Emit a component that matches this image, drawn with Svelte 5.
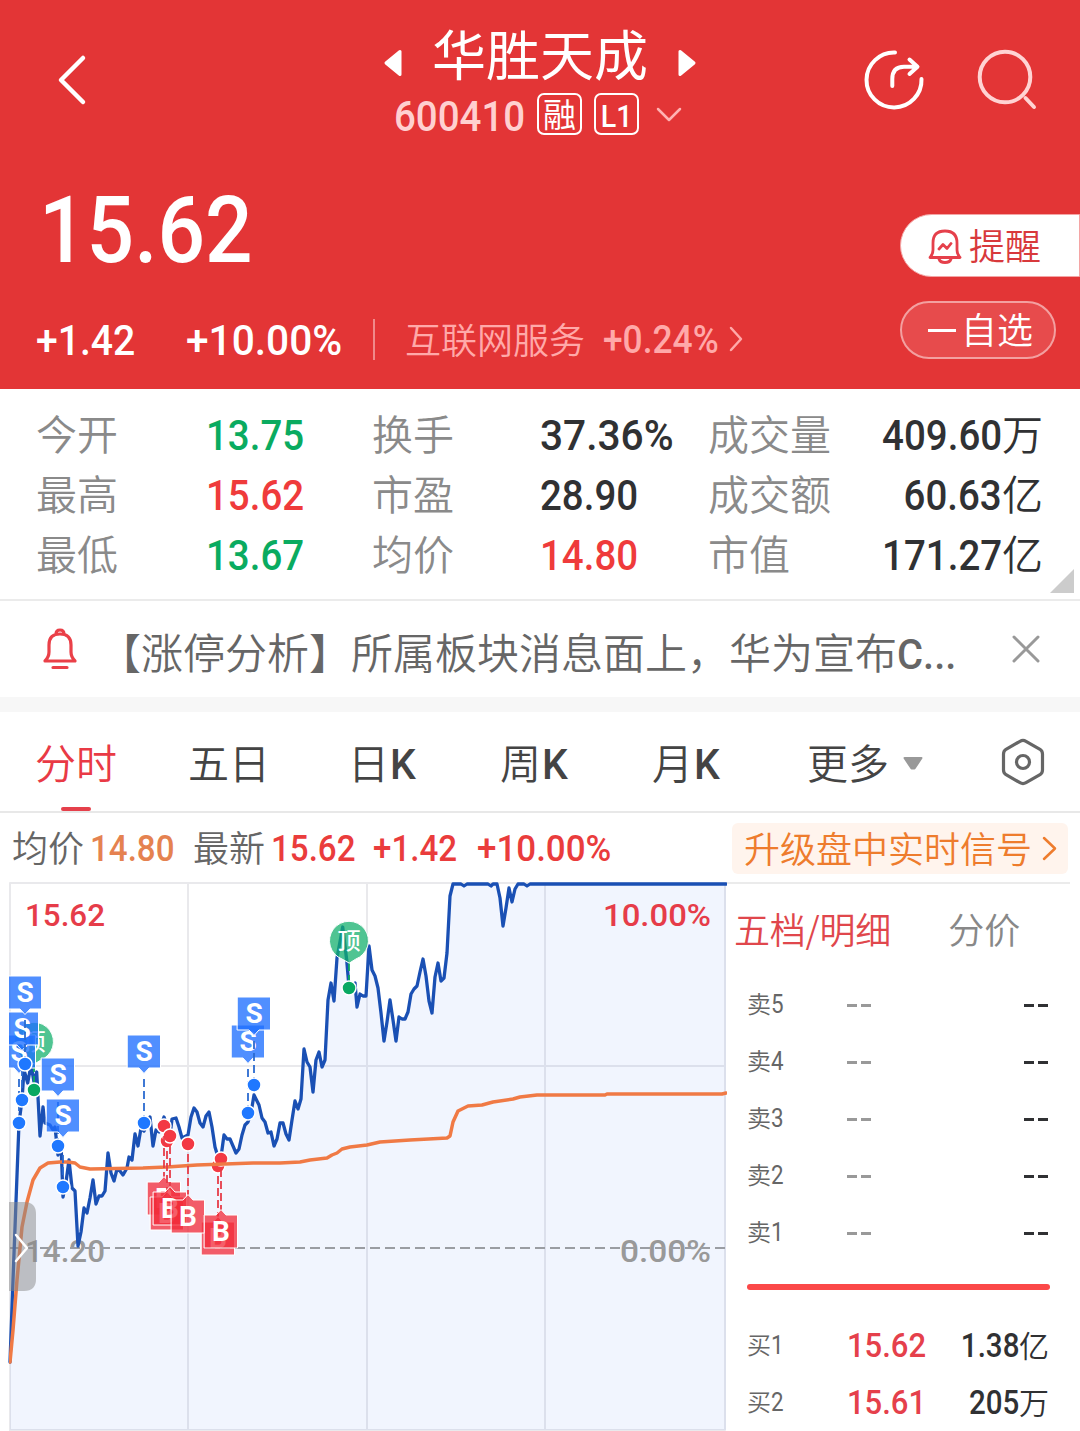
<script>
  const quotes = [
    [['今开', '13.75', 'green'], ['换手', '37.36%', 'pct'], ['成交量', '409.60', '', '万']],
    [['最高', '15.62', 'red'], ['市盈', '28.90', ''], ['成交额', '60.63', '', '亿']],
    [['最低', '13.67', 'green'], ['均价', '14.80', 'red'], ['市值', '171.27', '', '亿']]
  ];
  const asks = [5, 4, 3, 2, 1];
  const bids = [[1, '15.62', '1.38', '亿'], [2, '15.61', '205', '万']];

  const price =
    '10,1362 13,1280 19,1123 22,1100 24,1070 27.7,1083 31,1065 34,1082 36.7,1072 40,1136 43,1107 45,1123 50,1125 53,1130 55,1127 58,1155 61,1143 63,1197 66,1182 69,1160 72,1188 75,1191 78,1246 81,1232 84,1208 87,1213 90,1198 93,1180 96,1204 99,1196 102,1196 105,1191 108,1153 111,1173 114,1181 117,1169 120,1171 123,1175 127,1168 129,1157 132,1160 135,1134 138,1146 141,1128 144,1131 150,1117 153,1146 156,1130 159,1132 164,1117 167,1126 170,1136 172,1119 176,1118 179,1127 182,1138 188,1135 191,1117 194,1108 197,1112 200,1123 203,1127 206,1116 209,1112 212,1127 215,1147 218,1157 221,1157 224,1135 227,1139 230,1139 236,1153 239,1149 242,1135 245,1125 248,1122 251,1113 254,1095 259,1105 262,1118 265,1122 268,1133 271,1132 274,1146 277,1139 280,1123 283,1123 286,1134 289,1140 292,1120 295,1101 298,1109 301,1099 304,1049 307,1062 310,1067 313,1092 316,1060 319,1052 322,1067 325,1060 328,1000 331,983 334,1001 337,958 342.7,927 346.7,960 349,987 355,983 357,1007 360,994 363,996 366,996 369,946 372,970 375,976 378,988 381,1013 384,1041 387,1022 390,1000 393,1020 396,1041 399,1017 402,1019 405,1019 408,1012 411,994 414,989 417,986 420,972 423,959 426,976 429,1001 432,1013 435,977 438,963 441,981 444,978 447,953 450,896 453,884 461,884 464,886 467,884 488,884 491,886 493,884 497,884 500,898 503,926 506,908 509,888 512,902 515,889 518,884 524,884 527,886 530,884 726,884';
  const average =
    '10,1362 13,1330 17,1280 22,1227 27,1202 33,1180 40,1168 48,1163 60,1162 68,1162 75,1163 80,1167 90,1169 143,1168 167,1167 197,1165 253,1163 280,1163 300,1162 310,1160 327,1158 332,1155 337,1153 342,1149 350,1147 367,1145 380,1142 410,1140 447,1138 450,1136 453,1122 458,1111 468,1106 482,1105 493,1102 513,1099 520,1097 537,1095 605,1095 607,1094 722,1094 726,1093';

  // [x, dot y, box top]
  const sells = [[19, 1123, 1035], [22, 1100, 1012], [25, 1064, 976], [58, 1146, 1058], [63, 1187, 1099], [144, 1123, 1035], [248, 1113, 1025], [254, 1085, 997]];
  const buys = [[164, 1126, 1182], [167, 1141, 1197], [170, 1136, 1192], [218, 1166, 1222], [188, 1144, 1200], [221, 1159, 1215]];
  const tops = [[34, 1090, 1042], [349, 988, 941]];
</script>

<div class="screen">
  <header>
    <div class="bar">
      <div class="side">
        <svg class="back" width="30" height="52" viewBox="0 0 30 52"><path d="M26 4 4 26 26 48" /></svg>
      </div>
      <div class="center">
        <div class="name">
          <svg width="19" height="28" viewBox="0 0 19 28"><path d="M17 2.500v23L3 14z" /></svg>
          <h1>华胜天成</h1>
          <svg width="19" height="28" viewBox="0 0 19 28"><path d="M2 2.500v23L16 14z" /></svg>
        </div>
        <div class="code">
          <span class="num">600410</span>
          <b class="tag">融</b>
          <b class="tag"><span class="num">L1</span></b>
          <svg width="26" height="16" viewBox="0 0 26 16"><path d="M2 3l11 11L24 3" /></svg>
        </div>
      </div>
      <div class="side tools">
        <svg width="62" height="62" viewBox="0 0 62 62"><path d="M32 3.500A27.500 27.500 0 1 0 58.500 30M29.300 37V30Q29.300 17.700 41 17.700H54M46.500 10.500l8 7.200-8 7.200" /></svg>
        <svg class="find" width="62" height="62" viewBox="0 0 62 62"><circle cx="30" cy="28" r="25.300" /><path d="M50.500 49l8.500 9" /></svg>
      </div>
    </div>
    <div class="summary">
      <div class="figures">
        <div class="last num">15.62</div>
        <div class="change">
          <span class="num c1">+1.42</span>
          <span class="num pct c2">+10.00%</span>
          <i></i>
          <span class="sector">互联网服务</span>
          <span class="num pct c3">+0.24%</span>
          <svg width="16" height="28" viewBox="0 0 16 28"><path d="M3 3l10 11L3 25" /></svg>
        </div>
      </div>
      <div class="actions">
        <button class="alert">
          <svg width="34" height="36" viewBox="0 0 34 36"><path d="M2 29.500Q5 26 5 22V15Q5 3 17 3T29 15V22Q29 26 32 29.500ZM11 31Q12 34.500 17 34.500T23 31M11 21l4-4.500 4 4 4-5" /></svg><span>提醒</span>
        </button>
        <button class="fav"><s></s><span>自选</span></button>
      </div>
    </div>
  </header>

  <section class="quotes">
    {#each quotes as row}
      <div class="qrow">
        {#each row as [label, value, tone, unit]}
          <span class="label">{label}</span>
          <span class="value {tone}"><span class="num {tone}">{value}</span>{unit ?? ''}</span>
        {/each}
      </div>
    {/each}
    <svg class="corner" width="24" height="24"><path d="M24 0V24H0z" /></svg>
  </section>

  <section class="notice">
    <svg class="bell" width="36" height="44" viewBox="0 0 36 44"><path d="M3 34Q7 30 7 25V18Q7 7 18 7T29 18V25Q29 30 33 34ZM14 7Q14 3 18 3T22 7M11 40.500H25" /></svg>
    <p>【涨停分析】所属板块消息面上，华为宣布<span class="num">C...</span></p>
    <svg class="close" width="30" height="30" viewBox="0 0 30 30"><path d="M3 3l24 24M27 3L3 27" /></svg>
  </section>

  <nav>
    <span class="tab t1 on">分时</span>
    <span class="tab t2">五日</span>
    <span class="tab t3">日<b class="num">K</b></span>
    <span class="tab t4">周<b class="num">K</b></span>
    <span class="tab t5">月<b class="num">K</b></span>
    <span class="tab t6">更多</span>
    <svg class="drop" width="22" height="15" viewBox="0 0 22 15"><path d="M2.500 2h17L12.500 12.500h-3z" /></svg>
    <svg class="hex" width="44" height="50" viewBox="0 0 44 50"><path d="M19 4.300Q22 2.500 25 4.300L39 12.300Q41.500 14 41.500 17V33Q41.500 36 39 37.700L25 45.700Q22 47.500 19 45.700L5 37.700Q2.500 36 2.500 33V17Q2.500 14 5 12.300Z" /><circle cx="22" cy="25" r="6.500" /></svg>
  </nav>

  <div class="ticker">
    <span class="k1">均价</span><span class="num v1">14.80</span>
    <span class="k2">最新</span><span class="num v2">15.62</span>
    <span class="num v3">+1.42</span>
    <span class="num pct v4">+10.00%</span>
    <a class="upgrade"><span>升级盘中实时信号</span><svg width="16" height="26" viewBox="0 0 16 26"><path d="M2 3l11 10.500L2 24" /></svg></a>
  </div>

  <main>
    <svg class="chart" width="727" height="549" viewBox="0 882 727 549">
      <defs><clipPath id="plot"><rect x="9" y="882" width="718" height="549" /></clipPath></defs>
      <path class="grid" d="M10 1431V883H726M10 1066H725M10 1430H725M188 883V1430M367 883V1430M545 883V1430M725 883V1430" />
      <polygon class="area" points="{price} 726,1430 10,1430" />
      <text class="axis" x="25" y="1262" textLength="80" lengthAdjust="spacingAndGlyphs">14.20</text>
      <text class="axis end" x="711" y="1262" textLength="91" lengthAdjust="spacingAndGlyphs">0.00%</text>
      <path class="zero" d="M10 1248H725" />
      <text class="limit" x="25" y="926" textLength="80" lengthAdjust="spacingAndGlyphs">15.62</text>
      <text class="limit end" x="711" y="926" textLength="108" lengthAdjust="spacingAndGlyphs">10.00%</text>
      <polyline class="price" points={price} />
      <g clip-path="url(#plot)">
        {#each tops as [x, y, c]}
          <path class="stem green" d="M{x} {c + 22}V{y}" />
          <path class="pin" d="M{x} {c + 22}l-7 -4A19.500 19.500 0 1 1 {x + 7} {c + 18}z" />
          <text class="top" x={x} y={c + 8}>顶</text>
          <circle class="dot green" cx={x} cy={y} r="7" />
        {/each}
        {#each buys as [x, y]}
          <circle class="dot red" cx={x} cy={y} r="7" />
        {/each}
        <polyline class="avg" points={average} />
        {#each sells as [x, y, t]}
          <path class="stem blue" d="M{x} {y}V{t + 44}" />
          <path class="sell" d="M{x - 16.5} {t}h33v33h-11.500l-5 5.500-5-5.500h-11.500z" />
          <text class="mark" x={x} y={t + 26}>S</text>
        {/each}
        {#each sells as [x, y]}
          <circle class="dot blue" cx={x} cy={y} r="7" />
        {/each}
        {#each buys as [x, y, t]}
          <path class="stem red" d="M{x} {y + 10}V{t - 5}" />
          <path class="buy" d="M{x - 16.5} {t}h11.500l5-5.500 5 5.500h11.500v33h-33z" />
          <text class="mark" x={x} y={t + 26}>B</text>
        {/each}
        <path class="handle" d="M9 1202H24Q36 1202 36 1214V1279Q36 1291 24 1291H9z" />
        <path class="grip" d="M16 1235l11 13-11 13" />
      </g>
    </svg>

    <aside>
      <div class="modes"><span class="on">五档/明细</span><span>分价</span></div>
      {#each asks as n}
        <div class="level"><span class="side-label">卖<b class="num">{n}</b></span><em class="none"><i></i><i></i></em><em class="none dark"><i></i><i></i></em></div>
      {/each}
      <hr />
      {#each bids as [n, p, v, u]}
        <div class="level"><span class="side-label">买<b class="num">{n}</b></span><em class="num p">{p}</em><em class="v"><span class="num">{v}</span>{u}</em></div>
      {/each}
    </aside>
  </main>
</div>

<style>
  :global(body) { background: #fff; overflow: hidden; }
  .screen { width: 1080px; height: 1431px; overflow: hidden; background: #fff; color: #303133; font-family: "Noto Sans CJK SC", sans-serif; font-weight: 350; }
  .screen * { box-sizing: border-box; }
  span, b, em, h1, p { white-space: nowrap; font-style: normal; }
  svg { display: block; flex: none; fill: none; stroke-linecap: round; stroke-linejoin: round; }
  .num { display: inline-block; font-family: Roboto, sans-serif; font-weight: 500; transform: scaleX(.895); transform-origin: left; }
  .num.pct { transform: scaleX(.945); }
  .red { color: #ef3b3b; }
  .green { color: #0aab60; }

  header { height: 389px; background: #e33536; color: #fff; }
  .bar { display: flex; height: 150px; }
  .side { width: 360px; }
  .back { margin: 54px 0 0 57px; stroke: #fff; stroke-width: 4.500; }
  .center { width: 360px; padding-top: 10px; }
  .name { display: flex; justify-content: center; align-items: center; gap: 30px; height: 83px; }
  .name svg { fill: #fff; stroke: #fff; stroke-width: 3; margin-top: 23px; }
  h1 { margin: 3px 0 0; font-size: 54px; line-height: 60px; font-weight: 400; }
  .code { display: flex; align-items: center; height: 42px; padding-left: 34px; }
  .code > .num { font-size: 43px; width: 143px; color: #ffd0d0; padding-top: 3px; }
  .tag { width: 45px; height: 42px; margin-right: 12px; border: 2.500px solid #fff; border-radius: 7px; font-size: 33px; line-height: 37px; font-weight: 400; text-align: center; }
  .tag .num { font-size: 32px; line-height: 33px; transform-origin: center; }
  .code svg { margin-left: 5px; stroke: #ffb3b3; stroke-width: 2.500; }
  .tools { display: flex; padding: 49px 0 0 143px; gap: 50px; }
  .tools svg { stroke: #fff; stroke-width: 4; }
  .tools .find { stroke: #ffd3d3; }
  .summary { display: flex; justify-content: space-between; }
  .last { display: block; margin: 31px 0 0 39px; font-size: 92px; line-height: 100px; height: 100px; transform: scaleX(.91); }
  .change { display: flex; align-items: center; height: 50px; margin-top: 34px; padding-left: 36px; font-size: 43px; }
  .change .c1 { width: 150px; transform: scaleX(.91); }
  .c2 { width: 187px; }
  .change i { width: 2px; height: 41px; background: #f08a8a; margin: -2px 30px 0 0; }
  .sector { width: 198px; font-size: 36px; line-height: 50px; margin-top: -5px; color: #ffa9a9; }
  .change .c3 { width: 125px; font-size: 38px; color: #ffa9a9; transform: scaleX(.93); }
  .change svg { margin-top: -2px; stroke: #ffa9a9; stroke-width: 2.500; }
  .actions { width: 180px; padding-top: 64px; }
  button { display: flex; align-items: center; font: 350 36px/36px "Noto Sans CJK SC", sans-serif; color: #d8393c; }
  button span { margin-top: -4px; }
  .alert { width: 180px; height: 63px; padding: 0 0 0 27px; gap: 7px; background: #fff; border: 1px solid #f4a5a5; border-radius: 32px 0 0 32px; }
  .alert svg { stroke: #e5404b; stroke-width: 2.800; }
  .fav { width: 156px; height: 58px; margin-top: 24px; padding: 0 0 0 26px; gap: 5px; color: #fff; background: #e74b4c; border: 2px solid #f3a0a0; border-radius: 29px; }
  .fav s { width: 28px; height: 3px; background: #fff; }

  .quotes { position: relative; height: 212px; padding-top: 14px; border-bottom: 2px solid #ebebeb; }
  .qrow { display: grid; grid-template-columns: 170px 166px 168px 168px 140px 195px; height: 60px; padding-left: 36px; align-items: center; font-size: 41px; line-height: 60px; }
  .label { color: #8a8a8a; margin-top: -2px; }
  .value { height: 60px; margin-top: -2px; }
  .value:last-child { text-align: right; margin-top: -2px; }
  .value .num { font-size: 43px; line-height: 56px; }
  .value:not(:last-child) .num { margin-top: -3px; }
  .value:last-child .num { transform-origin: right; }
  .corner { position: absolute; right: 6px; bottom: 6px; fill: #ccc; }

  .notice { display: flex; align-items: center; height: 96px; padding-left: 42px; color: #666; }
  .bell { stroke: #ea4048; stroke-width: 3.200; }
  .notice p { width: 912px; margin: 0 0 0 21px; padding-top: 7px; font-size: 42px; line-height: 60px; }
  .notice .num { transform: scaleX(.95); }
  .close { stroke: #999; stroke-width: 3; }

  nav { display: flex; align-items: center; height: 116px; border-top: 15px solid #f7f7f7; border-bottom: 2px solid #e8e8e8; padding-left: 35px; font-size: 41px; color: #444; }
  .tab { height: 99px; line-height: 99px; }
  .tab .num { font-size: 43px; transform: translateX(1px) scaleX(.95); line-height: 60px; }
  .t1 { width: 153px; }
  .t2 { width: 160px; }
  .t3 { width: 152px; }
  .t4 { width: 152px; }
  .t5 { width: 155px; }
  .t6 { width: 95px; }
  .tab.on { color: #e93a45; display: flex; flex-direction: column; }
  .tab.on::after { content: ""; width: 30px; height: 4px; border-radius: 2px; background: #e5404b; margin: -4px 0 0 26px; }
  .drop { fill: #999; stroke: #999; stroke-width: 2; margin: 4px 77px 0 0; }
  .hex { stroke: #666; stroke-width: 3.200; }

  .ticker { display: flex; align-items: center; height: 69px; padding: 0 12px; font-size: 36px; line-height: 60px; color: #666; }
  .ticker .num { font-size: 37px; color: #ea3c3c; padding-top: 2px; }
  .k1, .k2 { width: 78px; margin-top: -4px; }
  .ticker .v1 { width: 103px; color: #e58250; }
  .v2 { width: 102px; }
  .v3 { width: 104px; }
  .upgrade { display: flex; align-items: center; gap: 10px; width: 336px; height: 51px; margin: 1px 0 0 auto; padding-left: 12px; border-radius: 6px; background: #fff4ed; color: #ee7c2d; white-space: nowrap; }
  .upgrade span { margin-top: -3px; }
  .upgrade svg { stroke: #ee7c2d; stroke-width: 2.500; }

  main { display: flex; height: 550px; }
  .grid { stroke: #e9e9ec; stroke-width: 2; }
  .area { fill: #3f7ff5; fill-opacity: .075; }
  .zero { stroke: #9a9da3; stroke-width: 2; stroke-dasharray: 10 5; stroke-linecap: butt; }
  .price { stroke: #1a50b4; stroke-width: 3.300; }
  .avg { stroke: #f07a45; stroke-width: 3.500; }
  text { font-family: Roboto, sans-serif; font-weight: 500; font-size: 32px; stroke: none; }
  .axis { fill: #999; }
  .limit { fill: #e63c49; }
  .end { text-anchor: end; }
  .dot { stroke: #fff; stroke-width: 1.500; }
  .dot.red { fill: #f33944; }
  .dot.blue { fill: #1f78ff; }
  .dot.green { fill: #08a862; }
  .stem { stroke-width: 1.800; stroke-dasharray: 8 4; stroke-linecap: butt; }
  .stem.red { stroke: #e63c49; }
  .stem.blue { stroke: #2b6bd0; }
  .stem.green { stroke: #08a862; }
  .sell { fill: #1f70ff; fill-opacity: .78; stroke: #fff; stroke-width: 1; }
  .buy { fill: #f22c3a; fill-opacity: .76; stroke: #fff; stroke-width: 1; }
  .pin { fill: #12b06c; fill-opacity: .74; stroke: #fff; stroke-width: 1; }
  .mark { fill: #fff; font-size: 28px; font-weight: 700; text-anchor: middle; }
  .top { fill: #fff; font-family: "Noto Sans CJK SC", sans-serif; font-size: 23px; font-weight: 500; text-anchor: middle; }
  .handle { fill: #888; fill-opacity: .5; }
  .grip { stroke: #fff; stroke-width: 2.500; }

  aside { width: 343px; border-top: 2px solid #ebebeb; padding-top: 14px; }
  .modes { display: flex; height: 60px; padding-left: 7px; gap: 57px; font-size: 36px; line-height: 60px; color: #888; }
  .modes .on { color: #e0474c; letter-spacing: -.2px; }
  .modes + .level { margin-top: 18px; }
  .level { display: grid; grid-template-columns: 99px 102px 101px; align-items: center; height: 57px; padding-left: 20px; color: #666; font-size: 24px; }
  .side-label { margin-top: -5px; }
  .level b { font-weight: 400; font-size: 25px; }
  .none { display: flex; gap: 4px; padding: 2px 1px 0 1px; }
  .none i { width: 10px; height: 3px; background: #999; }
  .dark i { background: #303133; }
  .dark { justify-content: flex-end; }
  .level .p { font-size: 33px; color: #e5404b; padding-left: 1px; transform: scaleX(.94); }
  .v { margin-top: -4px; font-size: 30px; text-align: right; color: #303133; }
  .v .num { font-size: 33px; transform-origin: right; }
  hr { width: 303px; height: 6px; margin: 23px 0 27px 20px; border: 0; border-radius: 3px; background: #fb4848; }
</style>
